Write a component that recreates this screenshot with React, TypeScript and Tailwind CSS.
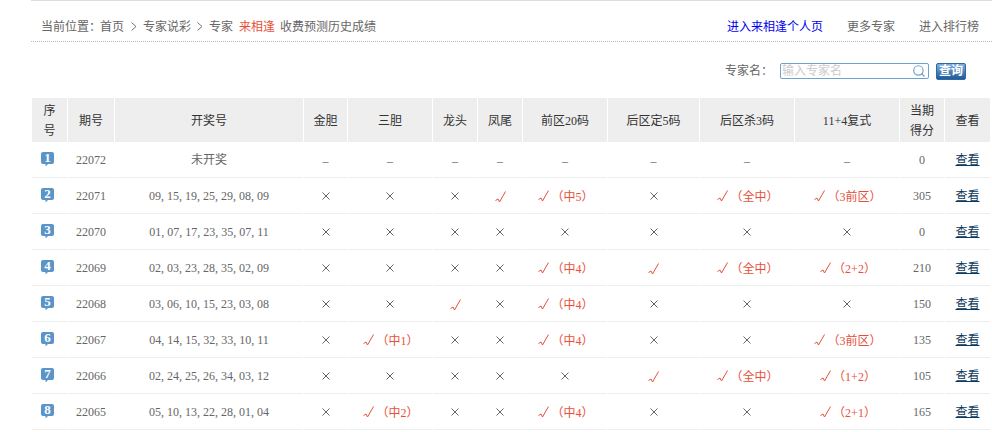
import { Search } from 'lucide-react';

type Mark = '-' | 'x' | 'v' | string;

const columns = [
  { label: ['序', '号'], width: 'w-[35px]' },
  { label: ['期号'], width: 'w-[46px]' },
  { label: ['开奖号'], width: 'w-[188px]' },
  { label: ['金胆'], width: 'w-[43px]' },
  { label: ['三胆'], width: 'w-[84px]' },
  { label: ['龙头'], width: 'w-[44px]' },
  { label: ['凤尾'], width: 'w-[44px]' },
  { label: ['前区20码'], width: 'w-[84px]' },
  { label: ['后区定5码'], width: 'w-[91px]' },
  { label: ['后区杀3码'], width: 'w-[94px]' },
  { label: ['11+4复式'], width: 'w-[104px]' },
  { label: ['当期', '得分'], width: 'w-[44px]' },
  { label: ['查看'], width: 'w-[45px]' },
];

const rows: { issue: string; nums: string; marks: Mark[]; score: number }[] = [
  { issue: '22072', nums: '未开奖', marks: ['-', '-', '-', '-', '-', '-', '-', '-'], score: 0 },
  { issue: '22071', nums: '09, 15, 19, 25, 29, 08, 09', marks: ['x', 'x', 'x', 'v', '中5', 'x', '全中', '3前区'], score: 305 },
  { issue: '22070', nums: '01, 07, 17, 23, 35, 07, 11', marks: ['x', 'x', 'x', 'x', 'x', 'x', 'x', 'x'], score: 0 },
  { issue: '22069', nums: '02, 03, 23, 28, 35, 02, 09', marks: ['x', 'x', 'x', 'x', '中4', 'v', '全中', '2+2'], score: 210 },
  { issue: '22068', nums: '03, 06, 10, 15, 23, 03, 08', marks: ['x', 'x', 'v', 'x', '中4', 'x', 'x', 'x'], score: 150 },
  { issue: '22067', nums: '04, 14, 15, 32, 33, 10, 11', marks: ['x', '中1', 'x', 'x', '中4', 'x', 'x', '3前区'], score: 135 },
  { issue: '22066', nums: '02, 24, 25, 26, 34, 03, 12', marks: ['x', 'x', 'x', 'x', 'x', 'v', '全中', '1+2'], score: 105 },
  { issue: '22065', nums: '05, 10, 13, 22, 28, 01, 04', marks: ['x', '中2', 'x', 'x', '中4', 'x', 'x', '2+1'], score: 165 },
];

function Cross() {
  return (
    <svg width="8" height="8" viewBox="0 0 8 8" className="inline-block align-middle -translate-y-px">
      <path d="M0.500 0.500l7 7M7.500 0.500l-7 7" stroke="#666" strokeWidth="1" fill="none" />
    </svg>
  );
}

function Tick() {
  return (
    <svg width="11" height="12" viewBox="0 0 11 12" className="inline-block align-middle">
      <path d="M0.500 9.500L3 8l1.500 3L10.500 0.500" stroke="#e8503a" strokeWidth="1" fill="none" />
    </svg>
  );
}

function Chevron() {
  return (
    <svg width="6" height="9" viewBox="0 0 6 9" className="mx-[6px] block">
      <path d="M0.500 0.500L5 4.500L0.500 8.500" stroke="#777" strokeWidth="1" fill="none" />
    </svg>
  );
}

function MarkCell({ mark }: { mark: Mark }) {
  if (mark === '-') return <span className="inline-block translate-y-px">–</span>;
  if (mark === 'x') return <Cross />;
  if (mark === 'v') return <Tick />;
  return (
    <span className="inline-block translate-x-px text-[#e8503a]">
      <Tick />
      <span className="inline-block align-middle ml-[2px] translate-y-px">（{mark}）</span>
    </span>
  );
}

function RankBadge({ n }: { n: number }) {
  return (
    <span className="relative block w-[13px] h-[14px] -translate-y-px">
      <svg width="13" height="14" viewBox="0 0 13 14" className="block">
        <path d="M2 0h9a2 2 0 0 1 2 2v8a2 2 0 0 1-2 2H7l-2.500 2.500v-2.500H2a2 2 0 0 1-2-2V2a2 2 0 0 1 2-2z" fill="#5b94c9" />
      </svg>
      <span className="absolute left-0 top-[-1px] w-full text-center text-[13px] leading-[13px] font-bold text-white">{n}</span>
    </span>
  );
}

export default function App() {
  return (
    <div className="w-[992px] h-[432px] overflow-hidden bg-white text-[12px] text-[#666] font-['Liberation_Serif','Noto_Sans_CJK_SC',serif]">
      <div className="ml-[31px] border-t border-[#ddd]">
        <div className="h-[41px] flex items-center justify-between pl-[10px] pr-[13px] pt-[11px] border-b border-dotted border-[#bbb]">
          <div className="flex items-center">
            <span>当前位置：</span>
            <span className="ml-[-1px] mr-px">首页</span>
            <Chevron />
            <span>专家说彩</span>
            <Chevron />
            <span>专家</span>
            <span className="ml-[6px] text-[#e8503a]">来相逢</span>
            <span className="ml-[5px]">收费预测历史成绩</span>
          </div>
          <div className="flex items-center gap-[24px]">
            <a className="text-[#0000ee]">进入来相逢个人页</a>
            <a>更多专家</a>
            <a>进入排行榜</a>
          </div>
        </div>

        <div className="h-[56px] flex items-center justify-end pr-[26px] pt-[2px]">
          <span className="mr-[6px]">专家名：</span>
          <div className="relative ml-[1px] w-[149px] h-[16px] border border-[#6ea3cc] rounded-[2px]">
            <input
              placeholder="输入专家名"
              className="block w-full h-full px-px text-[12px] outline-none placeholder:text-[#ccc]"
            />
            <Search size={14} className="absolute right-[2px] top-0 text-[#6ea3cc]" />
          </div>
          <button className="ml-[7px] w-[30px] h-[17px] rounded-[2px] border border-[#2c6aa6] bg-gradient-to-b from-[#7db0e0] to-[#1f5a99] text-[12px] leading-[15px] font-bold text-white">
            查询
          </button>
        </div>

        <table className="table-fixed w-[960px] border-separate border-spacing-x-px border-spacing-y-0 text-center">
          <colgroup>
            {columns.map((c, i) => (
              <col key={i} className={c.width} />
            ))}
          </colgroup>
          <thead>
            <tr className="h-[44px] text-[#333]">
              {columns.map((c, i) => (
                <th key={i} className="bg-[#eee] font-normal leading-[20px] p-0 pt-[2px]">
                  {c.label.map((l) => (
                    <div key={l}>{l}</div>
                  ))}
                </th>
              ))}
            </tr>
          </thead>
          <tbody>
            {rows.map((r, i) => (
              <tr key={r.issue} className="h-[36px]">
                <td className="border-b border-[#eee] p-0 pl-[9px]">
                  <RankBadge n={i + 1} />
                </td>
                <td className="border-b border-[#eee] p-0 pt-px">{r.issue}</td>
                <td className="border-b border-[#eee] p-0 pt-px">{r.nums}</td>
                {r.marks.map((m, j) => (
                  <td key={j} className="border-b border-[#eee] p-0">
                    <MarkCell mark={m} />
                  </td>
                ))}
                <td className="border-b border-[#eee] p-0 pt-px">{r.score}</td>
                <td className="border-b border-[#eee] p-0 pt-px">
                  <a className="text-[#0b3a5c] underline">查看</a>
                </td>
              </tr>
            ))}
          </tbody>
        </table>
      </div>
    </div>
  );
}
